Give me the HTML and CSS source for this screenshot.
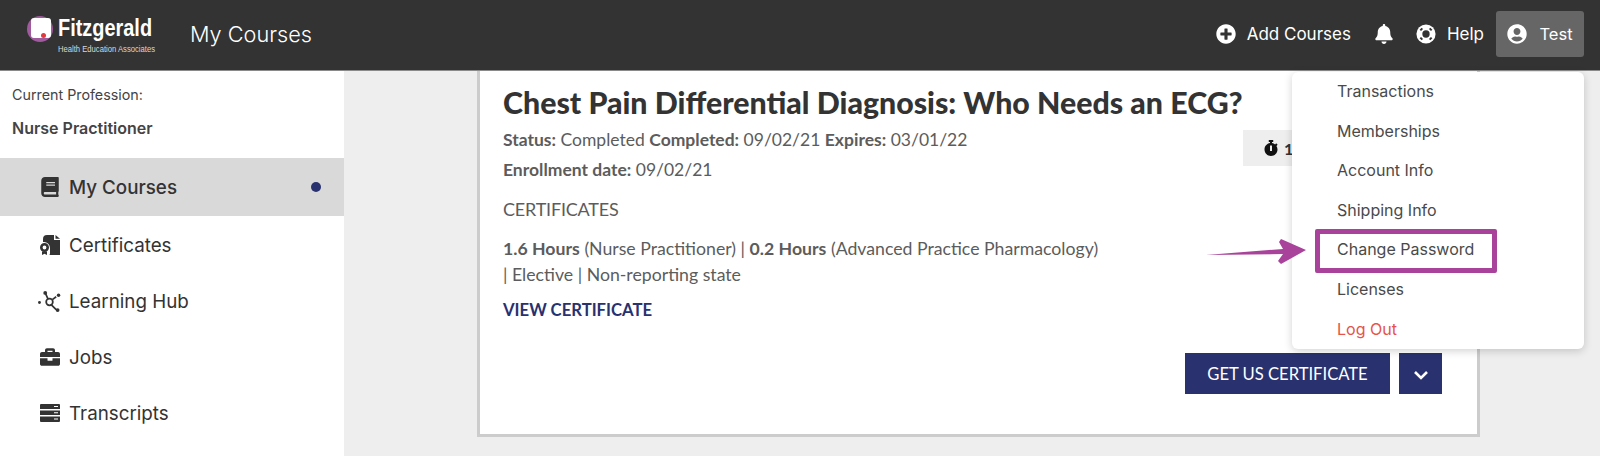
FILE: index.html
```html
<!DOCTYPE html>
<html lang="en">
<head>
    <meta charset="UTF-8">
    <title>My Courses</title>
    <link rel="stylesheet" href="styles.css">
</head>
<body>
    <header class="topbar">
        <div class="logo">
            <div class="logo-mark"><span class="logo-dot"></span></div>
            <div class="logo-text">
                <div class="logo-name">Fitzgerald</div>
                <div class="logo-sub">Health Education Associates</div>
            </div>
        </div>
        <div class="page-title">My Courses</div>
        <nav class="top-nav">
            <a class="top-link add-link">
                <svg class="top-icon" viewBox="0 0 512 512"><path d="M256 8C119 8 8 119 8 256s111 248 248 248 248-111 248-248S393 8 256 8zm144 276c0 6.6-5.4 12-12 12h-92v92c0 6.6-5.4 12-12 12h-56c-6.6 0-12-5.4-12-12v-92h-92c-6.6 0-12-5.4-12-12v-56c0-6.6 5.4-12 12-12h92v-92c0-6.6 5.4-12 12-12h56c6.6 0 12 5.4 12 12v92h92c6.6 0 12 5.4 12 12v56z"/></svg>
                Add Courses
            </a>
            <a class="top-link bell-link">
                <svg class="top-icon" viewBox="0 0 448 512"><path d="M224 512c35.32 0 63.97-28.65 63.97-64H160.03c0 35.35 28.65 64 63.97 64zm215.39-149.71c-19.32-20.76-55.47-51.99-55.47-154.29 0-77.7-54.48-139.9-127.94-155.16V32c0-17.67-14.32-32-31.98-32s-31.98 14.33-31.98 32v20.84C118.56 68.1 64.08 130.3 64.08 208c0 102.3-36.15 133.53-55.47 154.29-6 6.45-8.66 14.16-8.61 21.71.11 16.4 12.98 32 32.1 32h383.8c19.12 0 32-15.6 32.1-32 .05-7.55-2.61-15.27-8.61-21.71z"/></svg>
            </a>
            <a class="top-link help-link">
                <svg class="top-icon" viewBox="0 0 24 24">
                    <circle cx="12" cy="12" r="11.5"/>
                    <circle class="ring-cut" cx="12" cy="12" r="4.4"/>
                    <path class="ring-slit" d="M5.2 7.6 7.6 5.2M16.4 5.2l2.4 2.4M18.8 16.4l-2.4 2.4M7.6 18.8l-2.4-2.4"/>
                </svg>
                Help
            </a>
            <a class="top-link user-link">
                <svg class="top-icon" viewBox="0 0 496 512"><path d="M248 8C111 8 0 119 0 256s111 248 248 248 248-111 248-248S385 8 248 8zm0 96c48.6 0 88 39.4 88 88s-39.4 88-88 88-88-39.4-88-88 39.4-88 88-88zm0 344c-58.7 0-111.3-26.6-146.5-68.2 18.8-35.4 55.6-59.8 98.5-59.8 2.4 0 4.8.4 7.1 1.1 13 4.2 26.6 6.9 40.9 6.9 14.3 0 28-2.7 40.9-6.9 2.3-.7 4.7-1.1 7.1-1.1 42.9 0 79.7 24.4 98.5 59.8C359.3 421.4 306.7 448 248 448z"/></svg>
                Test
            </a>
        </nav>
    </header>

    <div class="layout">
        <aside class="sidebar">
            <div class="profession-label">Current Profession:</div>
            <div class="profession-name">Nurse Practitioner</div>
            <ul class="side-menu">
                <li class="side-item active">
                    <svg class="side-icon" viewBox="0 0 448 512"><path d="M448 360V24c0-13.3-10.7-24-24-24H96C43 0 0 43 0 96v320c0 53 43 96 96 96h328c13.3 0 24-10.7 24-24v-16c0-7.5-3.5-14.3-8.9-18.7-4.2-15.4-4.2-59.3 0-74.7 5.4-4.3 8.9-11.1 8.9-18.6zM128 134c0-3.3 2.7-6 6-6h212c3.3 0 6 2.7 6 6v20c0 3.3-2.7 6-6 6H134c-3.3 0-6-2.7-6-6v-20zm0 64c0-3.3 2.7-6 6-6h212c3.3 0 6 2.7 6 6v20c0 3.3-2.7 6-6 6H134c-3.3 0-6-2.7-6-6v-20zm253.4 250H96c-17.7 0-32-14.3-32-32 0-17.6 14.4-32 32-32h285.4c-1.9 17.1-1.9 46.9 0 64z"/></svg>
                    My Courses
                    <span class="side-dot"></span>
                </li>
                <li class="side-item">
                    <svg class="side-icon" viewBox="0 0 20 20">
                        <path d="M7 0h7v5h6v15H9.5l.5-1.5V13a6 6 0 0 0-6-6c-.4 0-.7 0-1 .1V4a4 4 0 0 1 4-4z"/>
                        <path d="M15.5 0 20 3.8h-4.500z"/>
                        <path fill-rule="evenodd" d="M4.5 8a4.500 4.500 0 1 1 0 9 4.500 4.500 0 0 1 0-9zm0 2.600a1.900 1.900 0 1 0 0 3.800 1.900 1.900 0 0 0 0-3.800z"/>
                        <path d="M2 16.5h5V20l-2.500-1.200L2 20z"/>
                    </svg>
                    Certificates
                </li>
                <li class="side-item">
                    <svg class="side-icon hub-icon" viewBox="0 0 24 22">
                        <path class="hub-line" d="M8 3l2.500 5.500M14 14.500l5 5M15 9l4-3"/>
                        <circle class="hub-ring" cx="12" cy="11.500" r="3.500"/>
                        <circle cx="7.500" cy="2" r="2"/>
                        <circle cx="1.500" cy="12" r="1.500"/>
                        <circle cx="21.500" cy="4.500" r="1.800"/>
                        <circle cx="20.500" cy="20" r="2"/>
                    </svg>
                    Learning Hub
                </li>
                <li class="side-item">
                    <svg class="side-icon" viewBox="0 0 512 512"><path d="M320 336c0 8.84-7.16 16-16 16h-96c-8.84 0-16-7.16-16-16v-48H0v144c0 25.6 22.4 48 48 48h416c25.6 0 48-22.4 48-48V288H320v48zm144-208h-80V80c0-25.6-22.4-48-48-48H176c-25.6 0-48 22.4-48 48v48H48c-25.6 0-48 22.4-48 48v80h512v-80c0-25.6-22.4-48-48-48zm-144 0H192V96h128v32z"/></svg>
                    Jobs
                </li>
                <li class="side-item">
                    <svg class="side-icon" viewBox="0 0 20 18">
                        <path fill-rule="evenodd" d="M1 0h18a1 1 0 0 1 1 1v4H0V1a1 1 0 0 1 1-1zm13 2v1h4V2zM0 6.5h20V11H0zm14 1.700v1h4v-1zM0 12.500h20V17a1 1 0 0 1-1 1H1a1 1 0 0 1-1-1zm14 2v1h4v-1z"/>
                    </svg>
                    Transcripts
                </li>
            </ul>
        </aside>

        <main class="main">
            <section class="course-card">
                <h2 class="course-title">Chest Pain Differential Diagnosis: Who Needs an ECG?</h2>
                <div class="course-head">
                    <div class="course-meta">
                        <p><b>Status:</b> Completed <b>Completed:</b> 09/02/21 <b>Expires:</b> 03/01/22</p>
                        <p><b>Enrollment date:</b> 09/02/21</p>
                    </div>
                    <div class="time-chip">
                        <svg class="chip-icon" viewBox="0 0 448 512"><path d="M432 304c0 114.9-93.1 208-208 208S16 418.9 16 304c0-104 76.3-190.2 176-205.5V64h-28c-6.6 0-12-5.4-12-12V12c0-6.6 5.4-12 12-12h120c6.6 0 12 5.4 12 12v40c0 6.6-5.4 12-12 12h-28v34.5c37.5 5.8 71.7 21.6 99.7 44.6l27.5-27.5c4.7-4.7 12.3-4.7 17 0l28.3 28.3c4.7 4.7 4.7 12.3 0 17l-29.4 29.4-.6.6C419.7 223.3 432 262.2 432 304zm-176 36V188.5c0-6.6-5.4-12-12-12h-40c-6.6 0-12 5.4-12 12V340c0 6.6 5.4 12 12 12h40c6.6 0 12-5.4 12-12z"/></svg>
                        <b>1</b>
                    </div>
                </div>
                <div class="cert-heading">CERTIFICATES</div>
                <p class="cert-text"><b>1.6 Hours</b> (Nurse Practitioner) | <b>0.2 Hours</b> (Advanced Practice Pharmacology)<br>| Elective | Non-reporting state</p>
                <a class="view-link">VIEW CERTIFICATE</a>
                <div class="card-actions">
                    <button class="btn-cert">GET US CERTIFICATE</button>
                    <button class="btn-more">
                        <svg viewBox="0 0 16 10"><path d="M2 2l6 6 6-6"/></svg>
                    </button>
                </div>
            </section>
        </main>
    </div>

    <ul class="user-menu">
        <li>Transactions</li>
        <li>Memberships</li>
        <li>Account Info</li>
        <li>Shipping Info</li>
        <li class="marked">Change Password</li>
        <li>Licenses</li>
        <li class="logout">Log Out</li>
    </ul>

    <svg class="note-arrow" viewBox="0 0 100 26"><path d="M0 16 77 10 73 3 75 0 100 11 75 25 72 22 77 15z"/></svg>
</body>
</html>
```

FILE: styles.css
```css
:root {
    --dark: #333333;
    --text: #444444;
    --navy: #29316f;
    --magenta: #a9429a;
}

*, *::after, *::before {
    margin: 0;
    padding: 0;
    box-sizing: border-box;
}

html, body {
    height: 456px;
    overflow: hidden;
}

body {
    font-family: 'Inter', sans-serif;
    background-color: #eeeeee;
    color: var(--text);
    position: relative;
}

/* top bar */
.topbar {
    height: 71px;
    background-color: var(--dark);
    border-bottom: 1px solid #8a8a8a;
    display: flex;
    align-items: center;
    padding: 0 16px 3px 27px;
    color: #ffffff;
}

.logo {
    display: flex;
    align-items: flex-start;
    gap: 5px;
    width: 163px;
    align-self: flex-start;
    margin-top: 16px;
}

.logo-mark {
    flex: none;
    width: 26px;
    height: 26px;
    border-radius: 50%;
    background-color: #a05a9e;
    position: relative;
}

.logo-mark::before {
    content: '';
    position: absolute;
    left: 4px;
    top: 2px;
    width: 20px;
    height: 20px;
    border-radius: 3px;
    background-color: #ffffff;
}

.logo-dot {
    position: absolute;
    left: 14px;
    top: 17px;
    width: 5px;
    height: 5px;
    border-radius: 50%;
    background-color: #e0393e;
}

.logo-text {
    white-space: nowrap;
}

.logo-name {
    font-family: 'Liberation Sans', sans-serif;
    font-weight: 700;
    font-size: 24px;
    line-height: 24px;
    transform: scaleX(0.83);
    transform-origin: left center;
}

.logo-sub {
    font-family: 'Liberation Sans', sans-serif;
    font-size: 9px;
    line-height: 11px;
    margin-top: 4px;
    color: #d8d8d8;
    transform: scaleX(0.85);
    transform-origin: left center;
}

.page-title {
    font-size: 21.7px;
    font-weight: 300;
}

.top-nav {
    margin-left: auto;
    display: flex;
    align-items: center;
}

.top-link {
    display: flex;
    align-items: center;
    gap: 11px;
    font-size: 17px;
    font-weight: 400;
}

.top-icon {
    width: 20px;
    height: 20px;
    fill: #ffffff;
}

.ring-cut {
    fill: var(--dark);
}

.ring-slit {
    fill: none;
    stroke: var(--dark);
    stroke-width: 2.4;
}

.bell-link {
    margin-left: 23px;
}

.help-link {
    margin-left: 22px;
}

.user-link {
    margin-left: 12px;
    width: 88px;
    height: 46px;
    justify-content: center;
    background-color: #666666;
    border-radius: 3px;
    gap: 12px;
    font-size: 16.5px;
}

/* page body */
.layout {
    display: flex;
    height: 385px;
}

.sidebar {
    width: 344px;
    background-color: #ffffff;
    padding-top: 14px;
}

.profession-label {
    font-size: 14.3px;
    line-height: 20px;
    padding-left: 12px;
}

.profession-name {
    font-size: 16px;
    font-weight: 600;
    line-height: 20px;
    padding-left: 12px;
    margin-top: 13px;
    margin-bottom: 20px;
}

.side-menu {
    list-style: none;
}

.side-item {
    height: 56px;
    display: flex;
    align-items: center;
    gap: 9px;
    padding-left: 40px;
    font-size: 18.8px;
    color: var(--dark);
}

.side-item.active {
    height: 58px;
    margin-bottom: 1px;
    background-color: #d9d9d9;
    font-weight: 500;
}

.side-icon {
    width: 20px;
    height: 20px;
    fill: var(--dark);
}

.hub-icon {
    width: 23px;
    height: 21px;
    margin-left: -2px;
    margin-right: -1px;
}

.hub-line, .hub-ring {
    fill: none;
    stroke: var(--dark);
    stroke-width: 1.8;
}

.side-dot {
    width: 10px;
    height: 10px;
    border-radius: 50%;
    background-color: var(--navy);
    margin-left: auto;
    margin-right: 23px;
}

.main {
    flex: 1;
    padding: 0 120px 19px 133px;
}

.course-card {
    height: 100%;
    background-color: #ffffff;
    border: 3px solid #cccccc;
    border-top: none;
    padding: 12px 35px 0 23px;
    font-family: 'Lato', sans-serif;
    color: #5c5c5c;
}

.course-card b {
    font-weight: 700;
}

.course-title {
    font-size: 30.3px;
    font-weight: 900;
    line-height: 38px;
    color: var(--dark);
    white-space: nowrap;
}

.course-head {
    display: flex;
    justify-content: space-between;
    margin-top: 4px;
}

.course-meta p {
    font-size: 17.5px;
    line-height: 30px;
}

.time-chip {
    width: 150px;
    height: 36px;
    margin-top: 5px;
    margin-right: 49px;
    background-color: #eeeeee;
    display: flex;
    align-items: center;
    gap: 6px;
    padding-left: 21px;
    color: var(--dark);
    font-size: 16px;
}

.chip-icon {
    width: 14px;
    height: 16px;
    fill: #111111;
}

.cert-heading {
    font-size: 18px;
    letter-spacing: -0.2px;
    line-height: 24px;
    margin-top: 12px;
}

.cert-text {
    font-size: 17.7px;
    line-height: 26px;
    margin-top: 15px;
}

.view-link {
    display: block;
    font-size: 16.7px;
    font-weight: 700;
    line-height: 24px;
    color: var(--navy);
    margin-top: 10px;
}

.card-actions {
    display: flex;
    justify-content: flex-end;
    gap: 9px;
    margin-top: 31px;
}

.card-actions button {
    height: 41px;
    background-color: var(--navy);
    color: #ffffff;
    border: none;
    font-family: 'Lato', sans-serif;
    font-size: 16.6px;
}

.btn-cert {
    width: 205px;
}

.btn-more {
    width: 43px;
}

.btn-more svg {
    width: 16px;
    height: 10px;
    fill: none;
    stroke: #ffffff;
    stroke-width: 2.6;
}

/* dropdown from the user button */
.user-menu {
    position: absolute;
    left: 1292px;
    top: 72px;
    width: 292px;
    height: 277px;
    background-color: #ffffff;
    border-radius: 6px;
    box-shadow: 0 2px 8px rgba(0, 0, 0, 0.18);
    list-style: none;
    font-size: 16px;
    color: #4a4a4a;
}

.user-menu li {
    height: 39.6px;
    line-height: 39px;
    padding-left: 45px;
    position: relative;
}

.user-menu .logout {
    color: #e8524a;
}

.user-menu .marked::after {
    content: '';
    position: absolute;
    left: 23px;
    top: -1px;
    width: 182px;
    height: 44px;
    border: 5.5px solid var(--magenta);
    border-radius: 2px;
}

.note-arrow {
    position: absolute;
    left: 1206px;
    top: 239px;
    width: 100px;
    height: 26px;
    fill: var(--magenta);
}
```
